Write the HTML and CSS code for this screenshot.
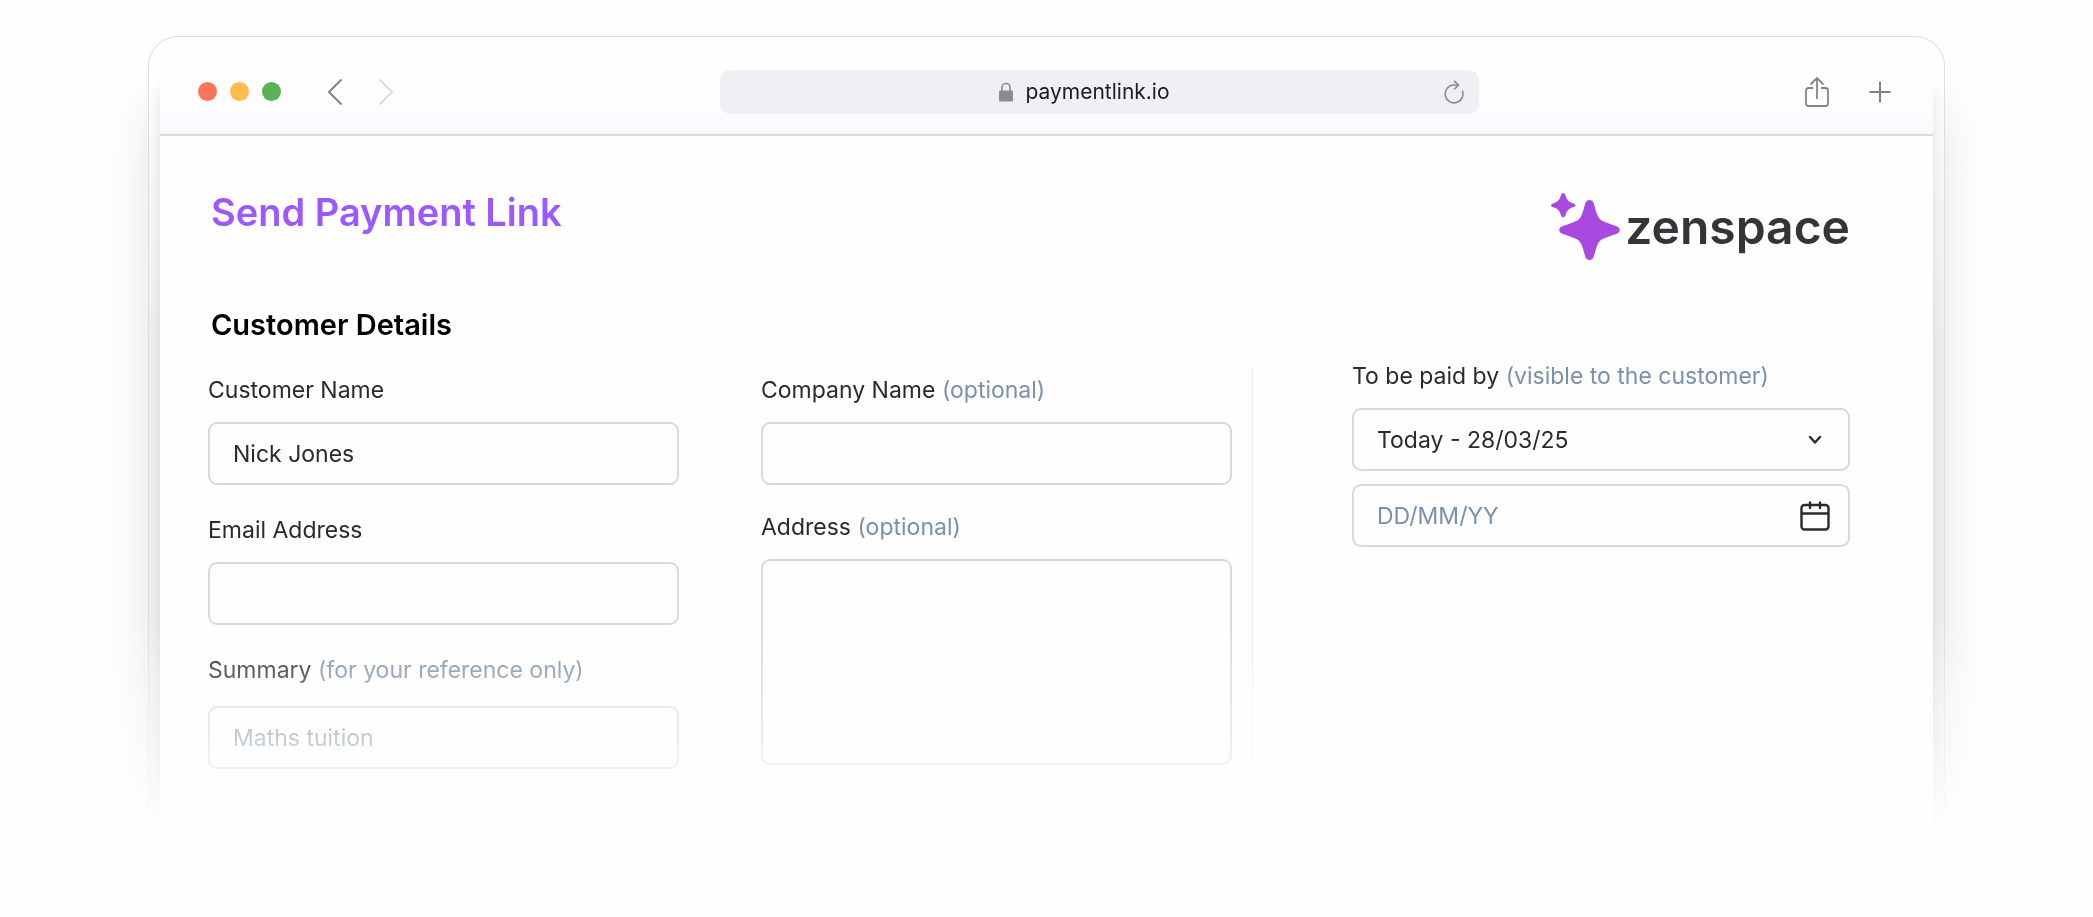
FILE: index.html
```
<!DOCTYPE html>
<html lang="en">

<head>
    <meta charset="UTF-8">
    <meta name="viewport" content="width=device-width, initial-scale=1.0">
    <title>Send Payment Link</title>
    <link rel="stylesheet" href="styles.css">
</head>

<body>
    <div class="stage">
        <div class="frame">
            <div class="window">
                <div class="toolbar">
                    <div class="dots">
                        <span class="dot red"></span>
                        <span class="dot yellow"></span>
                        <span class="dot green"></span>
                    </div>
                    <div class="nav">
                        <button type="button" class="icon-button" aria-label="Back">
                            <svg width="16" height="28" viewBox="0 0 16 28" fill="none" stroke="#858387" stroke-width="2"><path d="M14.5 1.5 2 14l12.500 12.500"/></svg>
                        </button>
                        <button type="button" class="icon-button" aria-label="Forward" disabled>
                            <svg width="16" height="28" viewBox="0 0 16 28" fill="none" stroke="#dfdde1" stroke-width="2"><path d="M1.500 1.500 14 14 1.500 26.500"/></svg>
                        </button>
                    </div>
                    <div class="address-bar">
                        <div class="url">
                            <svg width="14" height="20" viewBox="0 0 14 20"><path d="M3 9V5.500a4 4 0 0 1 8 0V9" fill="none" stroke="#8d8b8f" stroke-width="1.600"/><rect y="8.500" width="14" height="11" rx="1.500" fill="#8d8b8f"/></svg>
                            <span>paymentlink.io</span>
                        </div>
                        <button type="button" class="icon-button" aria-label="Reload">
                            <svg width="20" height="24" viewBox="0 0 20 24" fill="none" stroke="#8d8b8f" stroke-width="1.600"><path d="M13.500 5H10A8.900 8.900 0 1 0 18.300 10.500"/><path d="M10 .800l4.500 4.200-4.500 4.500"/></svg>
                        </button>
                    </div>
                    <div class="actions">
                        <button type="button" class="icon-button" aria-label="Share">
                            <svg width="24" height="32" viewBox="0 0 24 32" fill="none" stroke="#858387" stroke-width="1.800"><path d="M8 12H3.500A2.500 2.500 0 0 0 1 14.500v13A2.500 2.500 0 0 0 3.500 30h17a2.500 2.500 0 0 0 2.500-2.500v-13A2.500 2.500 0 0 0 20.500 12H16M12 23V2.500M5.500 8.500 12 2l6.500 6.500"/></svg>
                        </button>
                        <button type="button" class="icon-button" aria-label="New tab">
                            <svg width="22" height="22" viewBox="0 0 22 22" fill="none" stroke="#858387" stroke-width="2"><path d="M11 .500v21M.500 11h21"/></svg>
                        </button>
                    </div>
                </div>

                <form class="page">
                    <div class="page-header">
                        <h1>Send Payment Link</h1>
                        <div class="logo">
                            <svg width="70" height="68" viewBox="0 0 70 68" fill="#a849e0"><path d="M12.200 0Q13.700 0 14.300 2C15.700 6.500 17.500 9 22 10.200Q24.500 11 24.500 12.200Q24.500 13.500 22 14.200C17.500 15.500 15.700 18 14.300 22.500Q13.700 24.500 12.200 24.500Q10.800 24.500 10.100 22.500C8.700 18 7 15.500 2.300 14.200Q0 13.500 0 12.200Q0 11 2.300 10.200C7 9 8.700 6.500 10.100 2Q10.800 0 12.200 0Z"/><path d="M38.500 7Q41.600 7 42.600 10C44 14.200 45.100 20.300 47.500 24.300C49.700 28 54 29.200 65 33Q68.800 34.300 68.800 37Q68.800 39.700 65 41C54 44.800 49.700 46 47.500 49.700C45.100 53.700 44 59.800 42.600 64Q41.600 67 38.500 67Q35.400 67 34.400 64C33 59.800 31.900 53.700 29.500 49.700C27.300 46 23 44.800 12 41Q8.200 39.700 8.200 37Q8.200 34.300 12 33C23 29.200 27.300 28 29.500 24.300C31.900 20.300 33 14.200 34.400 10Q35.400 7 38.500 7Z"/></svg>
                            <span class="logo-text">zenspace</span>
                        </div>
                    </div>

                    <h2>Customer Details</h2>

                    <div class="columns">
                        <div class="details">
                            <div class="column">
                                <div class="field">
                                    <label for="name">Customer Name</label>
                                    <input type="text" id="name" value="Nick Jones">
                                </div>
                                <div class="field">
                                    <label for="email">Email Address</label>
                                    <input type="email" id="email">
                                </div>
                                <div class="field summary">
                                    <label for="summary">Summary <span class="hint">(for your reference only)</span></label>
                                    <input type="text" id="summary" placeholder="Maths tuition">
                                </div>
                            </div>
                            <div class="column address-column">
                                <div class="field">
                                    <label for="company">Company Name <span class="hint">(optional)</span></label>
                                    <input type="text" id="company">
                                </div>
                                <div class="field">
                                    <label for="address">Address <span class="hint">(optional)</span></label>
                                    <textarea id="address"></textarea>
                                </div>
                            </div>
                        </div>

                        <div class="divider"></div>

                        <div class="due">
                            <div class="field">
                                <label for="due">To be paid by <span class="hint">(visible to the customer)</span></label>
                                <div class="control">
                                    <select id="due">
                                        <option>Today - 28/03/25</option>
                                    </select>
                                    <svg class="control-icon chevron" width="14" height="10" viewBox="0 0 14 10" fill="none" stroke="#2b292d" stroke-width="2.400" stroke-linecap="round" stroke-linejoin="round"><path d="M2 2l5 5.500L12 2"/></svg>
                                </div>
                            </div>
                            <div class="control">
                                <input type="text" placeholder="DD/MM/YY" aria-label="Due date">
                                <svg class="control-icon calendar" width="30" height="30" viewBox="0 0 30 30" fill="none" stroke="#2b292d" stroke-width="2.400" stroke-linecap="round"><rect x="1.500" y="4" width="27" height="24.500" rx="3"/><path d="M2 12.500h26M10 1.500V7M20 1.500V7"/></svg>
                            </div>
                        </div>
                    </div>
                </form>
            </div>
        </div>
    </div>
</body>

</html>
```
FILE: styles.css
```
* {
    box-sizing: border-box;
}

body {
    margin: 0;
    background-color: #fefefe;
    font-family: Inter, "Liberation Sans", sans-serif;
    color: #2b292d;
}

/* everything fades out towards the bottom */
.stage {
    padding: 36px 148px 0;
    overflow: hidden;
    -webkit-mask-image: linear-gradient(#000 620px, transparent 836px);
    mask-image: linear-gradient(#000 620px, transparent 836px);
}

.frame {
    padding: 0 11px;
    overflow: hidden;
    border: 1px solid #dedce0;
    border-bottom: none;
    border-radius: 30px 30px 0 0;
    background: linear-gradient(#fefefe 40px, #f0eef1 300px);
    box-shadow: 0 60px 60px -10px rgba(0, 0, 0, 0.14);
}

.window {
    background-color: #fefefe;
    border-radius: 28px 28px 0 0;
    box-shadow: 0 40px 14px rgba(0, 0, 0, 0.1);
}

.toolbar {
    display: flex;
    align-items: center;
    height: 99px;
    padding: 12px 42px 0 38px;
    border-bottom: 2px solid #dddbde;
    border-radius: 28px 28px 0 0;
    background: linear-gradient(#fefefe 40%, #fbf9fd);
}

.dots {
    display: flex;
    gap: 13px;
}

.dot {
    width: 19px;
    height: 19px;
    border-radius: 50%;
}

.red {
    background-color: #fa745d;
}

.yellow {
    background-color: #fdba4d;
}

.green {
    background-color: #5bb254;
}

.nav {
    display: flex;
    gap: 35px;
    margin-left: 46px;
}

.icon-button {
    display: flex;
    padding: 0;
    border: none;
    background: none;
}

.address-bar {
    display: flex;
    align-items: center;
    flex: 0 1 759px;
    height: 44px;
    margin: 0 auto;
    padding: 0 15px;
    border-radius: 10px;
    background-color: #f1eff3;
}

.url {
    display: flex;
    flex: 1;
    align-items: center;
    justify-content: center;
    gap: 12px;
    padding-right: 10px;
    font-size: 21px;
    color: #1c1b1e;
}

.actions {
    display: flex;
    align-items: center;
    gap: 40px;
}

.page {
    padding: 54px 83px 70px 48px;
}

.page-header {
    display: flex;
    justify-content: space-between;
    align-items: flex-start;
}

h1 {
    margin: 0;
    padding-left: 3px;
    font-size: 38px;
    font-weight: 600;
    line-height: 44px;
    color: #9b59ff;
}

.logo {
    display: flex;
    align-items: center;
    gap: 4px;
    padding-top: 3px;
}

.logo-text {
    font-size: 48px;
    font-weight: 600;
    line-height: 68px;
    color: #373439;
}

h2 {
    margin: 46px 0 19px;
    padding-left: 3px;
    font-size: 29px;
    font-weight: 600;
    line-height: 36px;
    color: #000;
}

.columns {
    display: grid;
    grid-template-columns: 1044fr 1px 597fr;
}

.details {
    display: grid;
    grid-template-columns: 1fr 1fr;
    gap: 82px;
    padding: 14px 20px 0 0;
}

.column {
    display: flex;
    flex-direction: column;
    gap: 31px;
}

.address-column {
    gap: 28px;
}

.field {
    display: flex;
    flex-direction: column;
    gap: 18px;
}

.summary {
    gap: 22px;
}

label {
    font-size: 23px;
    line-height: 28px;
}

.hint {
    color: #7b90aa;
}

input,
select,
textarea {
    display: block;
    width: 100%;
    height: 63px;
    padding: 0 23px;
    border: 2px solid #d5d9e5;
    border-radius: 9px;
    background-color: #fefefe;
    font-family: inherit;
    font-size: 23px;
    color: inherit;
    appearance: none;
}

textarea {
    height: 206px;
    resize: none;
}

input::placeholder {
    color: #7b90aa;
    opacity: 1;
}

.divider {
    margin: 6px 0 12px;
    background-color: #ebebf3;
}

.due {
    display: flex;
    flex-direction: column;
    gap: 13px;
    margin-left: 99px;
}

.control {
    position: relative;
}

.control-icon {
    position: absolute;
    top: 0;
    bottom: 0;
    margin: auto 0;
    pointer-events: none;
}

.chevron {
    right: 28px;
}

.calendar {
    right: 20px;
}
```
